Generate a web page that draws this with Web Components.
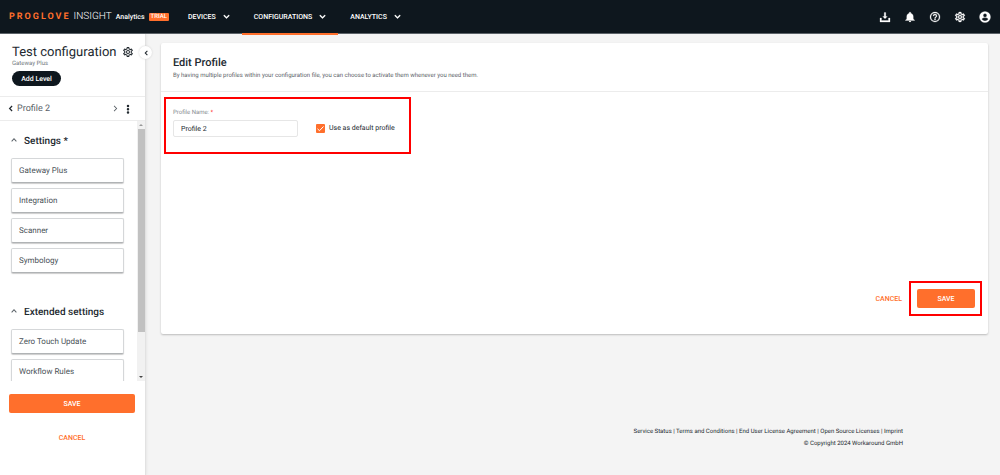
<!DOCTYPE html>
<html lang="en">
<head>
<meta charset="utf-8">
<title>Insight – Edit Profile</title>
<style>
html, body { height: 100%; }
body { margin: 0; font: 7px/10px Roboto, "Liberation Sans", sans-serif; color: #22292f; background: #f4f4f4; text-rendering: geometricPrecision; }
</style>
</head>
<body>
<insight-app></insight-app>
<script>
const define = (name, html, setup) => {
  const tpl = document.createElement('template');
  tpl.innerHTML = '<style>*{box-sizing:border-box}button{font:inherit;color:inherit;text-rendering:inherit;background:none;border:0;padding:0;margin:0;cursor:pointer}a{color:inherit;text-decoration:none}svg{display:block}</style>' + html;
  customElements.define(name, class extends HTMLElement {
    constructor() {
      super();
      this.attachShadow({ mode: 'open' }).appendChild(tpl.content.cloneNode(true));
    }
    connectedCallback() { if (setup) setup(this, this.shadowRoot); }
  });
};

const GEAR = 'M19.43 12.98c.04-.32.07-.64.07-.98s-.03-.66-.07-.98l2.11-1.65a.5.5 0 0 0 .12-.64l-2-3.46a.5.5 0 0 0-.61-.22l-2.49 1a7.3 7.3 0 0 0-1.69-.98l-.38-2.65A.49.49 0 0 0 14 2h-4a.49.49 0 0 0-.49.42l-.38 2.65c-.61.25-1.17.59-1.69.98l-2.49-1a.5.5 0 0 0-.61.22l-2 3.46a.49.49 0 0 0 .12.64l2.11 1.65c-.04.32-.07.65-.07.98s.03.66.07.98l-2.11 1.65a.5.5 0 0 0-.12.64l2 3.46c.12.22.39.3.61.22l2.49-1c.52.4 1.08.73 1.69.98l.38 2.65c.03.24.24.42.49.42h4c.25 0 .46-.18.49-.42l.38-2.65a7.7 7.7 0 0 0 1.69-.98l2.49 1a.5.5 0 0 0 .61-.22l2-3.46a.5.5 0 0 0-.12-.64zm-1.98-1.71c.04.31.05.52.05.73s-.02.43-.05.73l-.14 1.13.89.7 1.08.84-.7 1.21-1.27-.51-1.04-.42-.9.68c-.43.32-.84.56-1.25.73l-1.06.43-.16 1.13-.2 1.35h-1.4l-.35-2.48-1.06-.43a5.7 5.7 0 0 1-1.23-.71l-.91-.7-1.06.43-1.27.51-.7-1.21 1.08-.84.89-.7-.14-1.13c-.03-.31-.05-.54-.05-.74s.02-.43.05-.73l.14-1.13-.89-.7-1.08-.84.7-1.21 1.27.51 1.04.42.9-.68c.43-.32.84-.56 1.25-.73l1.06-.43.16-1.13.2-1.35h1.39l.35 2.48 1.06.43c.43.18.83.41 1.23.71l.91.7 1.06-.43 1.27-.51.7 1.21-1.07.85-.89.7zM12 8a4 4 0 1 0 0 8 4 4 0 0 0 0-8zm0 6a2 2 0 1 1 0-4 2 2 0 0 1 0 4z';
const ICONS = {
  gear: GEAR,
  download: 'M10.500 3h3v8h3L12 15.500 7.500 11h3zM2 14h3v5h14v-5h3v8H2z',
  bell: 'M12 22c1.100 0 2-.9 2-2h-4c0 1.100.9 2 2 2zm6.500-6v-5c0-3.300-1.800-5.900-5-6.700V3.500a1.500 1.500 0 0 0-3 0v.8c-3.200.8-5 3.400-5 6.700v5L3 18v1h18v-1z',
  help: 'M11 18h2v-2h-2zm1-16a10 10 0 1 0 0 20 10 10 0 0 0 0-20zm0 18a8 8 0 1 1 0-16 8 8 0 0 1 0 16zm0-14a4 4 0 0 0-4 4h2a2 2 0 1 1 4 0c0 2-3 1.750-3 5h2c0-2.250 3-2.500 3-5a4 4 0 0 0-4-4z',
  user: 'M12 1a11 11 0 1 0 0 22 11 11 0 0 0 0-22zm0 4a3.700 3.700 0 1 1 0 7.400A3.700 3.700 0 0 1 12 5zm0 15a8 8 0 0 1-6.500-3.500c0-2.200 4.300-3.300 6.500-3.300s6.500 1.100 6.500 3.300A8 8 0 0 1 12 20z',
  dots: 'M12 1.500a3 3 0 1 0 0 6 3 3 0 0 0 0-6zm0 8a3 3 0 1 0 0 6 3 3 0 0 0 0-6zm0 8a3 3 0 1 0 0 6 3 3 0 0 0 0-6z',
  down: 'M4.500 6 12 13.500 19.500 6l3 3L12 19.500 1.500 9z',
  up: 'M4 19 12 10l8 9 3-3L12 4 1 16z',
  left: 'M16 2 6 12l10 10 3-3-7-7 7-7z',
  right: 'M8 2 18 12 8 22l-2-2 8-8-8-8z'
};
define('ui-icon', `<style>:host{display:block;flex:none;width:12px;height:12px}svg{width:100%;height:100%;fill:currentColor}path{stroke:currentColor;stroke-width:var(--icon-stroke,0)}</style><svg viewBox="0 0 24 24" aria-hidden="true"><path/></svg>`,
  (el, root) => root.querySelector('path').setAttribute('d', ICONS[el.getAttribute('name')]));

define('nav-item', `<style>
:host{display:block}
a{display:flex;align-items:center;gap:7px;height:100%;padding:0 12px;font-weight:500;color:#fff;border-bottom:2px solid transparent}
:host([active]) a{border-bottom-color:#ff6f2c}
ui-icon{width:7px;height:7px}
</style><a href="#"><slot></slot><ui-icon name="down"></ui-icon></a>`);

define('app-header', `<style>
:host{display:flex;align-items:stretch;position:relative;z-index:1;height:34px;background:#0e171e;border-bottom:1px solid #5b6268;color:#fff;padding:0 9px;--icon-stroke:.5px}
.brand{display:flex;align-items:center;width:167px}
.pro{color:#ff6f2c;font-size:9px;font-weight:700;letter-spacing:2px;margin-right:3px}
.ins{font-size:10px;font-weight:300;margin-right:4px}
.ana{font-weight:500;margin-right:4px}
.trial{background:#ff6f2c;font-size:6px;line-height:8px;font-weight:500;padding:0 2px;border-radius:1px}
nav{display:flex;margin-bottom:-2px}
.tools{display:flex;align-items:center;gap:13px;margin-left:auto}
</style>
<a class="brand" href="#"><span class="pro">PROGLOVE</span><span class="ins">INSIGHT</span><span class="ana">Analytics</span><span class="trial">TRIAL</span></a>
<nav><nav-item>DEVICES</nav-item><nav-item active>CONFIGURATIONS</nav-item><nav-item>ANALYTICS</nav-item></nav>
<div class="tools">
<button aria-label="Downloads"><ui-icon name="download"></ui-icon></button>
<button aria-label="Notifications"><ui-icon name="bell"></ui-icon></button>
<button aria-label="Help"><ui-icon name="help"></ui-icon></button>
<button aria-label="Settings"><ui-icon name="gear"></ui-icon></button>
<button aria-label="Account"><ui-icon name="user"></ui-icon></button>
</div>`);

define('ui-button', `<style>
:host{display:block}
button{display:block;width:100%;height:19px;border-radius:2px;color:#ff6f2c;font-weight:500}
:host([primary]) button{background:#ff6f2c;color:#fff}
</style><button type="button"><slot></slot></button>`);

define('setting-item', `<style>
:host{display:block}
button{display:block;width:100%;height:25px;padding:0 7px;text-align:left;font-size:8px;color:#4a5258;background:#fff;border:1px solid #d5d7d9;border-bottom-color:#b0b3b5;border-radius:2px;box-shadow:0 1px 1px #ccc}
</style><button type="button"><slot></slot></button>`);

define('setting-group', `<style>
:host{display:block}
h2{margin:0 0 9px;font-size:10px;line-height:14px;font-weight:500}
h2 button{display:flex;gap:7px;width:100%;text-align:left}
ui-icon{width:6px;height:6px;margin-top:2px;color:#5b6268}
.list{display:grid;gap:5px}
</style><h2><button type="button"><ui-icon name="up"></ui-icon><slot name="title"></slot></button></h2><div class="list"><slot></slot></div>`);

define('side-bar', `<style>
:host{display:flex;flex-direction:column;position:relative;width:146px;flex:none;background:#fff;border-right:1px solid #e2e2e2;box-shadow:0 0 3px #ddd}
.top{padding:12px 11px 0 12px;height:62px}
.row{display:flex;align-items:flex-start;justify-content:space-between;height:14px}
h1{margin:0;font-size:13px;line-height:14px;font-weight:400;white-space:nowrap}
.sub{font-size:6px;line-height:8px;color:#70777c}
.add{display:block;margin-top:3px;width:49px;height:15px;border-radius:8px;background:#0e171e;color:#fff;font-weight:500}
.fold{position:absolute;right:-7px;top:12px;width:13px;height:13px;border-radius:50%;background:#fff;display:grid;place-items:center;box-shadow:0 0 2px #ccc}
.fold ui-icon{width:6px;height:6px}
.crumb{display:flex;align-items:center;height:25px;padding:0 12px 0 7px;border:solid #ececec;border-width:1px 0;color:#5b6268;font-size:9px}
.crumb span{flex:1;margin-left:3px}
.crumb ui-icon{width:7px;height:7px}
.crumb ui-icon[name=dots]{width:10px;height:10px;margin-left:4px;color:#22292f}
.back{color:#22292f}
.scroll{display:flex;flex:1;min-height:0}
.list{flex:1;overflow:hidden;padding:14px 13px 0 11px;display:grid;align-content:start;gap:33px}
.bar{display:flex;flex-direction:column;align-items:center;width:8px;background:#f1f1f1}
.bar::before,.bar::after{content:"";border:2px solid transparent;margin:3px 0}
.bar::before{border-top-width:0;border-bottom-color:#999}
.bar::after{border-bottom-width:0;border-top-color:#444}
.thumb{width:7px;flex:83;background:#c1c1c1}.rest{flex:17}
.foot{padding:13px 10px 28px 9px;display:grid;gap:15px}
</style>
<div class="top"><div class="row"><h1>Test configuration</h1><button aria-label="Configuration settings"><ui-icon name="gear"></ui-icon></button></div>
<div class="sub">Gateway Plus</div><button class="add">Add Level</button></div>
<button class="fold" aria-label="Collapse sidebar"><ui-icon name="left"></ui-icon></button>
<div class="crumb"><button class="back" aria-label="Previous profile"><ui-icon name="left"></ui-icon></button><span>Profile 2</span><button aria-label="Next profile"><ui-icon name="right"></ui-icon></button><button aria-label="More"><ui-icon name="dots"></ui-icon></button></div>
<div class="scroll"><div class="list">
<setting-group><span slot="title">Settings *</span><setting-item>Gateway Plus</setting-item><setting-item>Integration</setting-item><setting-item>Scanner</setting-item><setting-item>Symbology</setting-item></setting-group>
<setting-group><span slot="title">Extended settings</span><setting-item>Zero Touch Update</setting-item><setting-item>Workflow Rules</setting-item></setting-group>
</div><div class="bar"><div class="thumb"></div><div class="rest"></div></div></div>
<div class="foot"><ui-button primary>SAVE</ui-button><ui-button>CANCEL</ui-button></div>`);

define('red-frame', `<style>:host{display:block;border:2px solid #f00}</style><slot></slot>`);

define('profile-card', `<style>
:host{display:flex;flex-direction:column;min-height:291px;background:#fff;border-radius:2px;box-shadow:0 1px 2px #bbb}
header{padding:13px 12px 0;height:49px;border-bottom:1px solid #ececec}
h2{margin:0 0 1px;font-size:11px;line-height:14px;font-weight:500}
p{margin:0;font-size:6px;color:#5b6268}
form{flex:1;display:flex;flex-direction:column;align-items:flex-start;padding:5px 6px 18px 3px}
.fields{display:flex;align-items:flex-end;gap:18px;padding:9px 14px 15px 7px}
.name{display:grid;gap:2px;font-size:6px;color:#858b90}
.name i{color:#f44;font-style:normal}
.name input{width:125px;height:17px;margin:0;padding:0 7px;border:1px solid #e6e6e6;border-radius:2px;font:7px Roboto,"Liberation Sans",sans-serif;text-rendering:inherit;color:#22292f}
.check{display:flex;align-items:center;gap:4px;height:18px}
.check input{appearance:none;display:block;width:9px;height:9px;margin:0;border-radius:1px;background:#ddd}
.check input:checked{background:#ff6f2c}
.box{display:grid}.box>*{grid-area:1/1}.box svg{z-index:1;pointer-events:none}
.actions{display:flex;align-items:center;align-self:flex-end;gap:7px;margin-top:auto}
.actions red-frame{padding:6px 5px 6px 6px}
.actions red-frame ui-button{width:58px}
</style>
<header><h2>Edit Profile</h2><p>By having multiple profiles within your configuration file, you can choose to activate them whenever you need them.</p></header>
<form><red-frame><div class="fields">
<label class="name"><span>Profile Name: <i>*</i></span><input type="text" value="Profile 2"></label>
<label class="check"><span class="box"><input type="checkbox" checked><svg width="9" height="9" viewBox="0 0 9 9"><path d="M1.500 4.800 3.500 6.700 7.500 2.500" fill="none" stroke="#fff"/></svg></span>Use as default profile</label>
</div></red-frame>
<div class="actions"><ui-button>CANCEL</ui-button><red-frame><ui-button primary>SAVE</ui-button></red-frame></div></form>`);

define('app-footer', `<style>:host{display:block;text-align:right;font-size:6px;line-height:12px;padding:0 97px 25px 12px}</style>
<div><a href="#">Service Status</a> | <a href="#">Terms and Conditions</a> | <a href="#">End User License Agreement</a> | <a href="#">Open Source Licenses</a> | <a href="#">Imprint</a></div><div>© Copyright 2024 Workaround GmbH</div>`);

define('insight-app', `<style>
:host{display:flex;flex-direction:column;height:100vh}
.body{display:flex;flex:1;min-height:0}
main{flex:1;min-width:0;display:flex;flex-direction:column;justify-content:space-between;padding:9px 12px 0 15px}
app-footer{margin:0 -12px 0 0}
</style><app-header></app-header><div class="body"><side-bar></side-bar><main><profile-card></profile-card><app-footer></app-footer></main></div>`);
</script>
</body>
</html>
